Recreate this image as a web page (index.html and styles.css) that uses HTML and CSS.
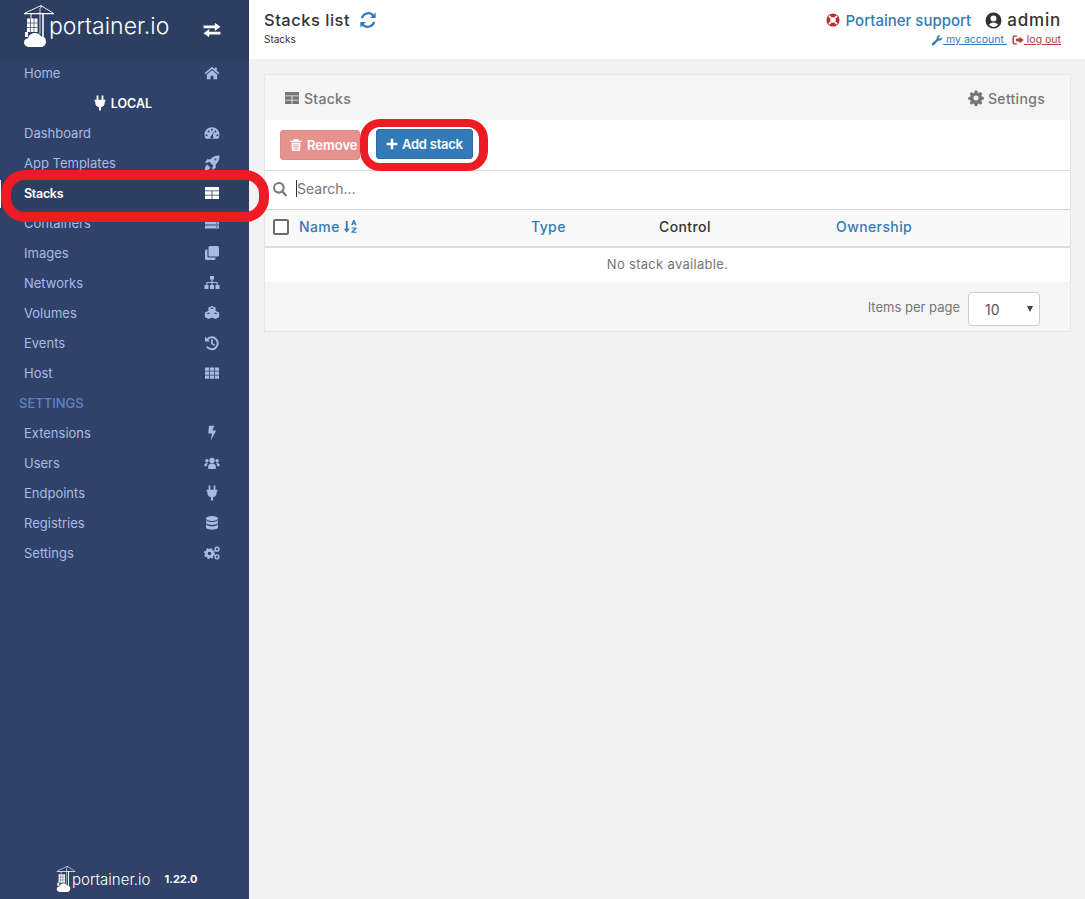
FILE: index.html
```html
<!DOCTYPE html>
<html>
<head>
  <title>Stacks list</title>
  <link rel="stylesheet" href="styles.css">
</head>
<body>
  <svg class="icon-defs" xmlns="http://www.w3.org/2000/svg">
    <symbol id="i-crane" viewBox="0 0 30 42">
      <path d="M0 8h30v1.200H0zM18.200 8h1.600v24h-1.600zM15.600 3h.8v26h-.8zM6.500 9h1v5h-1z" fill="#fff"/>
      <path d="M17 .6 1 8M17 .6 29 8M17 0v3" fill="none" stroke="#fff" stroke-width=".9"/>
      <path d="M3 13.500h10.500V27H3z" fill="#fff"/>
      <path d="M3 18h10.500M3 22.500h10.500M6.500 13.500V27M10 13.500V27" stroke="#30426a" stroke-width=".7"/>
      <path d="M1 27h3v5H1z" fill="#fff"/>
      <path d="M5.500 42C2.500 42 0 40 0 37.500c0-2.300 1.800-4 4-4.200C4.800 30.100 7.500 28 11 28c3 0 5.300 1.500 6.500 3.800 2.800-.5 4.500 1.700 4.500 4.700 0 3-2 5.500-5 5.500z" fill="#fff"/>
    </symbol>
    <symbol id="i-home" viewBox="0 0 16 16"><path d="M8 1.800 0.600 8l1 1.200L8 3.900l6.400 5.300 1-1.200-2.600-2.200V2.400h-2v1.900z"/><path d="M8 5.200 2.800 9.500v4.700h3.800v-3.400h2.800v3.400h3.800V9.500z"/></symbol>
    <symbol id="i-exchange" viewBox="0 0 16 16"><path d="M0.500 4h10V1.600L15.500 5.200l-5 3.600V6.400h-10zM15.500 9.600h-10V7.200L0.500 10.800l5 3.600V12h10z"/></symbol>
    <symbol id="i-plug" viewBox="0 0 16 16"><path d="M4.600 0.500h1.800v4.200h3.200V0.500h1.800v4.200h2v1.800h-.7v1.200c0 2.400-1.600 4.200-3.700 4.600v3.200H7v-3.200C4.900 11.900 3.300 10.100 3.300 7.700V6.500h-.7V4.700h2z"/></symbol>
    <symbol id="i-gauge" viewBox="0 0 16 16"><path fill-rule="evenodd" d="M8 2.200c-4.200 0-7.500 3.300-7.500 7.500 0 1.500.4 2.800 1.200 4h12.600c.8-1.200 1.200-2.500 1.200-4 0-4.200-3.300-7.500-7.500-7.500zM2.600 9.200a1 1 0 1 1 0 2 1 1 0 0 1 0-2zm2-3.800a1 1 0 1 1 0 2 1 1 0 0 1 0-2zM8 3.800a1 1 0 1 1 0 2 1 1 0 0 1 0-2zm3.400 1.600a1 1 0 1 1 0 2 1 1 0 0 1 0-2zm2 3.800a1 1 0 1 1 0 2 1 1 0 0 1 0-2zM9.800 6.500l-.9 4.500a1.500 1.500 0 1 1-1.500-.3z"/></symbol>
    <symbol id="i-rocket" viewBox="0 0 16 16"><path fill-rule="evenodd" d="M15.500 0.500c-4-.2-7 1.200-9 3.800H3.300L0.800 7.500l2.700.3 1.800-1 3.900 3.900-1 1.800.3 2.700 3.200-2.500V9.500c2.600-2 4-5 3.800-9zM11.500 3.500a1 1 0 1 1 0 2 1 1 0 0 1 0-2z"/><path d="M3.300 9.500c-1.400.6-2.200 2.300-2.500 5.700 3.400-.3 5.100-1.100 5.700-2.500z"/></symbol>
    <symbol id="i-table" viewBox="0 0 16 16"><path d="M1 2h14v3.600H1zM1 6.300h6.600v3.400H1zM8.400 6.300H15v3.400H8.400zM1 10.400h6.600V14H1zM8.400 10.400H15V14H8.400z"/></symbol>
    <symbol id="i-server" viewBox="0 0 16 16"><path fill-rule="evenodd" d="M1 2.500h14v3H1zM1 6.500h14v3H1zM1 10.500h14v3H1zM12 3.500v1h1.500v-1zM12 7.500v1h1.500v-1zM12 11.500v1h1.500v-1z"/></symbol>
    <symbol id="i-clone" viewBox="0 0 16 16"><path d="M6 1h7.500A1.500 1.500 0 0 1 15 2.500V10a1.500 1.500 0 0 1-1.500 1.500H6A1.500 1.500 0 0 1 4.500 10V2.500A1.500 1.500 0 0 1 6 1z"/><path d="M3.400 4.500v6.600c0 .9.600 1.500 1.500 1.500h6.600V13.500A1.500 1.500 0 0 1 10 15H2.500A1.500 1.500 0 0 1 1 13.500V6a1.500 1.500 0 0 1 1.500-1.500z"/></symbol>
    <symbol id="i-sitemap" viewBox="0 0 16 16"><path d="M6 1h4v3.500H8.600V7h5.100v3h1.800v4h-4v-4h1.100V8h-4v2h1.400v4H6v-4h1.400V8h-4v2h1.100v4h-4v-4h1.800V7h5.100V4.500H6z"/></symbol>
    <symbol id="i-cubes" viewBox="0 0 16 16"><path fill-rule="evenodd" d="M8 1l3.600 1.500v3.600l3.600 1.500v4.300L11.500 14 8 12.500 4.500 14 .8 11.900V7.600l3.600-1.500V2.500zM6 3.200 8 4l2-.8-2-.8zM2.400 8.300l2 .8 2-.8-2-.8zm7.200 0 2 .8 2-.8-2-.8z"/></symbol>
    <symbol id="i-history" viewBox="0 0 16 16"><path d="M1 1.500v5h5L4.300 4.800A4.900 4.900 0 1 1 3.700 11l-1.500 1.300A6.900 6.900 0 1 0 2.900 3.400z"/><path d="M7 4.500h1.800v3.700l2.400 1.500-.9 1.400L7 9z"/></symbol>
    <symbol id="i-th" viewBox="0 0 16 16"><path d="M1 2.500h4.200v3.300H1zM6 2.500h4v3.300H6zM10.800 2.500H15v3.300h-4.200zM1 6.500h4.200v3.200H1zM6 6.500h4v3.200H6zM10.800 6.500H15v3.200h-4.200zM1 10.400h4.200v3.300H1zM6 10.400h4v3.300H6zM10.800 10.400H15v3.300h-4.200z"/></symbol>
    <symbol id="i-bolt" viewBox="0 0 16 16"><path d="M5 0.800h5.300L8.400 5.600h3.800L6.800 15.600 8 8.600H4.200z"/></symbol>
    <symbol id="i-users" viewBox="0 0 16 16"><circle cx="8" cy="5.500" r="2.700"/><circle cx="2.900" cy="5.800" r="1.700"/><circle cx="13.100" cy="5.800" r="1.700"/><path d="M4 12.800c0-3 1.500-4.400 4-4.400s4 1.400 4 4.400c0 .8-.6 1.200-1.300 1.200H5.300C4.600 14 4 13.600 4 12.800zM.2 10.800c0-2 .9-2.900 2.700-2.900.5 0 .8.100 1 .3-.7.800-1 1.800-1 3.100H1.100c-.5 0-.9-.1-.9-.5zM15.800 10.800c0-2-.9-2.900-2.700-2.900-.5 0-.8.100-1 .3.700.8 1 1.800 1 3.100h1.800c.5 0 .9-.1.900-.5z"/></symbol>
    <symbol id="i-database" viewBox="0 0 16 16"><ellipse cx="8" cy="3.500" rx="6" ry="2.500"/><path d="M2 5c.8 1.400 3.200 2.100 6 2.100S13.200 6.400 14 5v2.600c0 1.400-2.700 2.400-6 2.400S2 9 2 7.600zM2 9.200c.8 1.400 3.200 2.100 6 2.100s5.200-.7 6-2.100v3.100c0 1.400-2.700 2.400-6 2.400s-6-1-6-2.400z"/></symbol>
    <symbol id="i-cogs" viewBox="0 0 16 16">
      <circle cx="5.500" cy="8.500" r="3.200" fill="none" stroke="currentColor" stroke-width="2.800"/>
      <circle cx="5.500" cy="8.500" r="4.900" fill="none" stroke="currentColor" stroke-width="1.400" stroke-dasharray="2 1.850"/>
      <circle cx="13" cy="4.200" r="1.900" fill="none" stroke="currentColor" stroke-width="1.500"/>
      <circle cx="13" cy="11.800" r="1.900" fill="none" stroke="currentColor" stroke-width="1.500"/>
    </symbol>
    <symbol id="i-trash" viewBox="0 0 16 16"><path fill-rule="evenodd" d="M5.500 1.200h5L11.300 3H14.500v1.500h-13V3h3zM2.800 5.300h10.400l-.6 9.500H3.400zM5.300 6.800v6.500h1v-6.500zM7.500 6.800v6.500h1v-6.500zM9.700 6.800v6.500h1v-6.500z"/></symbol>
    <symbol id="i-plus" viewBox="0 0 16 16"><path d="M6.500 2h3v4.500H14v3H9.500V14h-3V9.500H2v-3h4.500z"/></symbol>
    <symbol id="i-search" viewBox="0 0 16 16"><path fill-rule="evenodd" d="M6.800 1a5.800 5.800 0 0 1 4.700 9.200l3.700 3.700-1.600 1.600-3.700-3.700A5.800 5.800 0 1 1 6.800 1zm0 2a3.800 3.800 0 1 0 0 7.600 3.800 3.800 0 0 0 0-7.600z"/></symbol>
    <symbol id="i-cog" viewBox="0 0 16 16"><path fill-rule="evenodd" d="M6.700 1h2.600l.4 2 1.200.5 1.700-1.100 1.800 1.800-1.100 1.700.5 1.200 2 .4v2.600l-2 .4-.5 1.200 1.100 1.700-1.800 1.800-1.700-1.100-1.200.5-.4 2H6.700l-.4-2-1.200-.5-1.700 1.100-1.800-1.800 1.100-1.700-.5-1.200-2-.4V7.700l2-.4.5-1.200-1.100-1.700 1.800-1.800 1.700 1.100 1.200-.5zM8 6a2.500 2.500 0 1 0 0 5 2.500 2.500 0 0 0 0-5z" transform="translate(0 -.5)"/></symbol>
    <symbol id="i-refresh" viewBox="0 0 16 16"><path d="M14.800 1.300v5h-5l1.900-1.900A4.700 4.700 0 0 0 3.700 6.500H1.600a6.800 6.800 0 0 1 11.500-3.500zM1.200 14.700v-5h5l-1.900 1.900a4.700 4.700 0 0 0 8-2.100h2.100a6.800 6.800 0 0 1-11.500 3.500z"/></symbol>
    <symbol id="i-user-circle" viewBox="0 0 16 16"><path fill-rule="evenodd" d="M8 .5a7.500 7.500 0 1 1 0 15 7.500 7.500 0 0 1 0-15zM8 3.200a2.800 2.800 0 1 0 0 5.600 2.800 2.800 0 0 0 0-5.600zM8 9.800c-2 0-3.500.8-4.300 2.300A5.600 5.600 0 0 0 8 14c1.700 0 3.300-.7 4.300-1.900C11.500 10.600 10 9.800 8 9.800z"/></symbol>
    <symbol id="i-wrench" viewBox="0 0 16 16"><path d="M15 4.200c.4 2-.9 4.200-3.200 4.600-.7.100-1.400 0-2-.2l-5.700 6.200a1.700 1.700 0 0 1-2.500-2.400l6-5.800c-.5-2.300 1-4.700 3.600-5 .6-.1 1.100 0 1.600.1L10.200 4.200l.4 1.700 1.700.4z"/></symbol>
    <symbol id="i-signout" viewBox="0 0 16 16"><path d="M6.500 2v1.800H3.500c-.6 0-1 .4-1 1v6.400c0 .6.400 1 1 1h3V14h-3A2.900 2.900 0 0 1 .6 11.200V4.800A2.900 2.900 0 0 1 3.500 2zM10 3.500 15.500 8 10 12.500V10H5.500V6H10z"/></symbol>
    <symbol id="i-sort" viewBox="0 0 16 16"><path d="M3 2h2v8.500h2.200L4 14.500.8 10.500H3z"/><path d="M10.800 1h1.500l2.200 5.700h-1.500l-.4-1.100h-2l-.4 1.100H8.700zM11.500 3 11 4.500h1.100zM9.200 9h5.200v1.200l-3.200 3.300h3.300v1.200H9v-1.200l3.200-3.300h-3z"/></symbol>
  </svg>

  <div class="sidebar">
    <div class="sidebar-header">
      <div class="brand">
        <svg class="brand-logo"><use href="#i-crane"/></svg>
        <span class="brand-name">portainer.io</span>
      </div>
      <svg class="icon swap-icon"><use href="#i-exchange"/></svg>
    </div>

    <ul class="nav">
      <li><span>Home</span><svg class="icon"><use href="#i-home"/></svg></li>
      <li class="endpoint"><svg class="icon"><use href="#i-plug"/></svg><span>LOCAL</span></li>
      <li><span>Dashboard</span><svg class="icon"><use href="#i-gauge"/></svg></li>
      <li><span>App Templates</span><svg class="icon"><use href="#i-rocket"/></svg></li>
      <li class="active"><span>Stacks</span><svg class="icon"><use href="#i-table"/></svg></li>
      <li><span>Containers</span><svg class="icon"><use href="#i-server"/></svg></li>
      <li><span>Images</span><svg class="icon"><use href="#i-clone"/></svg></li>
      <li><span>Networks</span><svg class="icon"><use href="#i-sitemap"/></svg></li>
      <li><span>Volumes</span><svg class="icon"><use href="#i-cubes"/></svg></li>
      <li><span>Events</span><svg class="icon"><use href="#i-history"/></svg></li>
      <li><span>Host</span><svg class="icon"><use href="#i-th"/></svg></li>
      <li class="nav-title">SETTINGS</li>
      <li><span>Extensions</span><svg class="icon"><use href="#i-bolt"/></svg></li>
      <li><span>Users</span><svg class="icon"><use href="#i-users"/></svg></li>
      <li><span>Endpoints</span><svg class="icon"><use href="#i-plug"/></svg></li>
      <li><span>Registries</span><svg class="icon"><use href="#i-database"/></svg></li>
      <li><span>Settings</span><svg class="icon"><use href="#i-cogs"/></svg></li>
    </ul>

    <div class="sidebar-footer">
      <svg class="footer-logo"><use href="#i-crane"/></svg>
      <span class="footer-name">portainer.io</span>
      <span class="footer-version">1.22.0</span>
    </div>
  </div>

  <div class="main">
    <div class="topbar">
      <div class="page-title">
        <h1>Stacks list <svg class="icon refresh-icon"><use href="#i-refresh"/></svg></h1>
        <div class="crumb">Stacks</div>
      </div>
      <div class="top-right">
        <div class="top-line">
          <a class="support">
            <svg class="lifering" viewBox="0 0 16 16">
              <circle cx="8" cy="8" r="5.300" fill="none" stroke="#b8312f" stroke-width="4.400"/>
              <path d="M3.400 3.400l2.500 2.500M12.600 3.400l-2.500 2.500M3.400 12.600l2.500-2.500M12.600 12.600l-2.500-2.500" stroke="#fff" stroke-width="2"/>
            </svg>
            Portainer support
          </a>
          <span class="user"><svg class="icon user-icon"><use href="#i-user-circle"/></svg> admin</span>
        </div>
        <div class="user-links">
          <svg class="icon link-icon"><use href="#i-wrench"/></svg><a class="account-link"> my account </a>
          <svg class="icon link-icon logout-icon"><use href="#i-signout"/></svg><a class="logout-link"> log out</a>
        </div>
      </div>
    </div>

    <div class="content">
      <div class="card">
        <div class="card-header">
          <div class="card-title"><svg class="icon"><use href="#i-table"/></svg> Stacks</div>
          <div class="card-title"><svg class="icon"><use href="#i-cog"/></svg> Settings</div>
        </div>
        <div class="actions">
          <button class="btn btn-danger"><svg class="icon"><use href="#i-trash"/></svg> Remove</button>
          <button class="btn btn-primary"><svg class="icon"><use href="#i-plus"/></svg> Add stack</button>
        </div>
        <div class="search-bar">
          <svg class="icon"><use href="#i-search"/></svg>
          <span class="caret"></span>
          <input type="text" placeholder="Search...">
        </div>
        <div class="table-head">
          <div class="th-name"><span class="checkbox"></span><a>Name</a><svg class="icon sort-icon"><use href="#i-sort"/></svg></div>
          <div><a>Type</a></div>
          <div class="th-plain">Control</div>
          <div><a>Ownership</a></div>
        </div>
        <div class="empty-row">No stack available.</div>
        <div class="card-footer">
          <span class="per-page">Items per page</span>
          <div class="select-wrap">
            <select><option>10</option></select>
          </div>
        </div>
      </div>
    </div>
  </div>

  <!-- red annotations drawn over the screenshot -->
  <div class="mark mark-nav"></div>
  <div class="mark mark-add"></div>
</body>
</html>
```

FILE: styles.css
```css
:root {
  --sidebar-bg: #30426a;
  --sidebar-head: #2d3e63;
  --sidebar-text: #a9bbe2;
  --link-color: #337ab7;
  --text-primary: #333333;
  --text-muted: #767676;
  --border-color: #dddddd;
  --mark-color: #ed1c24;
}

* {
  box-sizing: border-box;
}

html, body {
  height: 100%;
}

body {
  margin: 0;
  display: flex;
  overflow: hidden;
  font-family: Inter, "Open Sans", sans-serif;
  font-size: 13px;
  color: var(--text-primary);
  background-color: #f2f2f2;
  position: relative;
}

.icon-defs {
  display: none;
}

.icon {
  width: 16px;
  height: 16px;
  fill: currentColor;
  flex: none;
}

/* Sidebar */
.sidebar {
  width: 249px;
  flex: none;
  display: flex;
  flex-direction: column;
  background-color: var(--sidebar-bg);
  color: var(--sidebar-text);
}

.sidebar-header {
  height: 59px;
  flex: none;
  display: flex;
  align-items: center;
  justify-content: space-between;
  padding: 0 28px 0 24px;
  background-color: var(--sidebar-head);
}

.brand {
  display: flex;
  align-items: flex-start;
  align-self: flex-start;
  padding-top: 5px;
  color: #fff;
}

.brand-logo {
  width: 30px;
  height: 42px;
  margin-right: -5px;
}

.brand-name {
  font-size: 23px;
  font-weight: 300;
  line-height: 26px;
  margin-top: 8px;
}

.swap-icon {
  width: 18px;
  height: 18px;
  color: #fff;
}

.nav {
  list-style: none;
  margin: 0;
  padding: 0;
}

.nav li {
  height: 30px;
  display: flex;
  align-items: center;
  justify-content: space-between;
  padding: 0 29px 2px 24px;
  white-space: nowrap;
}

.nav li.endpoint {
  justify-content: center;
  gap: 3px;
  padding: 0 5px 2px 0;
  color: #fff;
  font-weight: 600;
  font-size: 12.500px;
}

.nav li.active {
  color: #fff;
  font-size: 12.500px;
  font-weight: 600;
  letter-spacing: -.3px;
  background-color: #2d3e63;
}

.nav li.nav-title {
  padding-left: 19px;
  color: #6183c9;
  font-weight: 500;
}

.sidebar-footer {
  margin-top: auto;
  height: 40px;
  display: flex;
  align-items: center;
  justify-content: flex-start;
  padding-left: 56px;
  color: #fff;
}

.footer-logo {
  width: 20px;
  height: 26px;
}

.footer-name {
  font-size: 15px;
  font-weight: 300;
  margin-left: -4px;
}

.footer-version {
  font-size: 11px;
  font-weight: 700;
  margin-left: 14px;
}

/* Top bar */
.main {
  flex: 1;
  min-width: 0;
  display: flex;
  flex-direction: column;
}

.topbar {
  height: 59px;
  flex: none;
  display: flex;
  justify-content: space-between;
  padding: 0 24px 0 15px;
  background-color: #fff;
}

.page-title h1 {
  margin: 9px 0 0;
  font-size: 16.500px;
  font-weight: 500;
  letter-spacing: .5px;
  line-height: 22px;
  display: flex;
  align-items: center;
  gap: 9px;
}

.refresh-icon {
  width: 18px;
  height: 18px;
  color: var(--link-color);
}

.crumb {
  font-size: 10px;
  margin-top: 2px;
}

.top-right {
  display: flex;
  flex-direction: column;
  align-items: flex-end;
  padding-top: 9px;
}

.top-line {
  display: flex;
  align-items: center;
  gap: 14px;
  height: 22px;
  font-size: 15px;
}

.support {
  display: flex;
  align-items: center;
  gap: 6px;
  color: var(--link-color);
  font-weight: 500;
}

.lifering {
  width: 14px;
  height: 14px;
}

.user {
  display: flex;
  align-items: center;
  gap: 5px;
  font-size: 17px;
  font-weight: 500;
  letter-spacing: .8px;
}

.user-icon {
  width: 17px;
  height: 17px;
}

.user-links {
  display: flex;
  align-items: center;
  font-size: 10.500px;
  margin-top: 2px;
}

.user-links a {
  text-decoration: underline;
  white-space: pre;
}

.link-icon {
  width: 12px;
  height: 12px;
  color: var(--link-color);
}

.logout-icon {
  color: #b03a36;
  margin-left: 5px;
}

.account-link {
  color: var(--link-color);
}

.logout-link {
  color: #b03a36;
}

/* Stacks card */
.content {
  padding: 15px 14px 0 15px;
}

.card {
  border: 1px solid #e6e6e6;
  background-color: #f5f5f5;
}

.card-header {
  height: 45px;
  display: flex;
  align-items: center;
  justify-content: space-between;
  padding: 1px 25px 0 19px;
}

.card-title {
  display: flex;
  align-items: center;
  gap: 4px;
  font-size: 14px;
  font-weight: 500;
  letter-spacing: .3px;
  color: var(--text-muted);
}

.actions {
  height: 51px;
  display: flex;
  align-items: flex-start;
  gap: 16px;
  padding: 9px 15px 0;
  background-color: #fff;
  border-bottom: 1px solid var(--border-color);
}

.btn {
  height: 30px;
  display: flex;
  align-items: center;
  gap: 3px;
  padding: 0 8px;
  border-radius: 3px;
  font-family: inherit;
  font-size: 13px;
  font-weight: 600;
  color: #fff;
  white-space: nowrap;
}

.btn-danger {
  width: 80px;
  margin-top: 1px;
  gap: 4px;
  background-color: #e69390;
  border: 1px solid #e08a87;
}

.btn-primary {
  width: 97px;
  letter-spacing: -.25px;
  background-color: #337ab7;
  border: 1px solid #2e6da4;
}

.btn .icon {
  width: 14px;
  height: 14px;
}

.search-bar {
  height: 39px;
  display: flex;
  align-items: center;
  padding: 0 0 3px 7px;
  background-color: #fff;
  border-bottom: 1px solid #d0d0d0;
  color: var(--text-muted);
}

.search-bar .icon {
  margin-right: 8px;
}

.caret {
  width: 1px;
  height: 17px;
  background-color: #333;
}

.search-bar input {
  flex: 1;
  border: none;
  outline: none;
  padding: 0;
  font-family: inherit;
  font-size: 14px;
  background: transparent;
}

.search-bar input::placeholder {
  color: var(--text-muted);
  opacity: 1;
}

.table-head {
  height: 38px;
  display: grid;
  grid-template-columns: 266px 128px 177px 1fr;
  align-items: center;
  padding-bottom: 3px;
  background-color: #f9f9f9;
  border-bottom: 2px solid var(--border-color);
  font-size: 14px;
  font-weight: 500;
  letter-spacing: .4px;
}

.table-head a {
  color: var(--link-color);
}

.th-name {
  display: flex;
  align-items: center;
  padding-left: 8px;
}

.checkbox {
  width: 16px;
  height: 16px;
  border: 2px solid #6e6e6e;
  border-radius: 2px;
  background-color: #fff;
  margin-right: 10px;
}

.sort-icon {
  width: 15px;
  height: 15px;
  margin-left: 3px;
  color: var(--link-color);
}

.th-plain {
  color: #333;
}

.empty-row {
  height: 34px;
  display: flex;
  align-items: center;
  justify-content: center;
  padding-bottom: 2px;
  background-color: #fff;
  color: var(--text-muted);
  letter-spacing: .3px;
}

.card-footer {
  height: 49px;
  display: flex;
  align-items: center;
  justify-content: flex-end;
  gap: 8px;
  padding: 5px 30px 0 0;
  color: var(--text-muted);
}

.per-page {
  padding-bottom: 4px;
}

.select-wrap {
  position: relative;
  width: 72px;
  height: 34px;
}

.select-wrap::after {
  content: "";
  position: absolute;
  right: 7px;
  top: 14px;
  border-left: 3px solid transparent;
  border-right: 3px solid transparent;
  border-top: 6px solid #444;
}

select {
  width: 100%;
  height: 100%;
  appearance: none;
  padding: 0 16px;
  border: 1px solid #ccc;
  border-radius: 4px;
  background-color: #fff;
  font-family: inherit;
  font-size: 14px;
  color: #555;
}

/* Red annotation rings */
.mark {
  position: absolute;
  border-style: solid;
  border-color: var(--mark-color);
  pointer-events: none;
}

.mark-nav {
  left: 1px;
  top: 170px;
  width: 268px;
  height: 52px;
  border-width: 10px;
  border-radius: 24px;
}

.mark-nav::before {
  content: "";
  position: absolute;
  left: -11px;
  top: 0;
  width: 1px;
  height: 28px;
  background-color: #fff;
}

.mark-add {
  left: 360px;
  top: 119px;
  width: 128px;
  height: 52px;
  border-width: 8px 9px 8px 8px;
  border-radius: 20px;
}
```
